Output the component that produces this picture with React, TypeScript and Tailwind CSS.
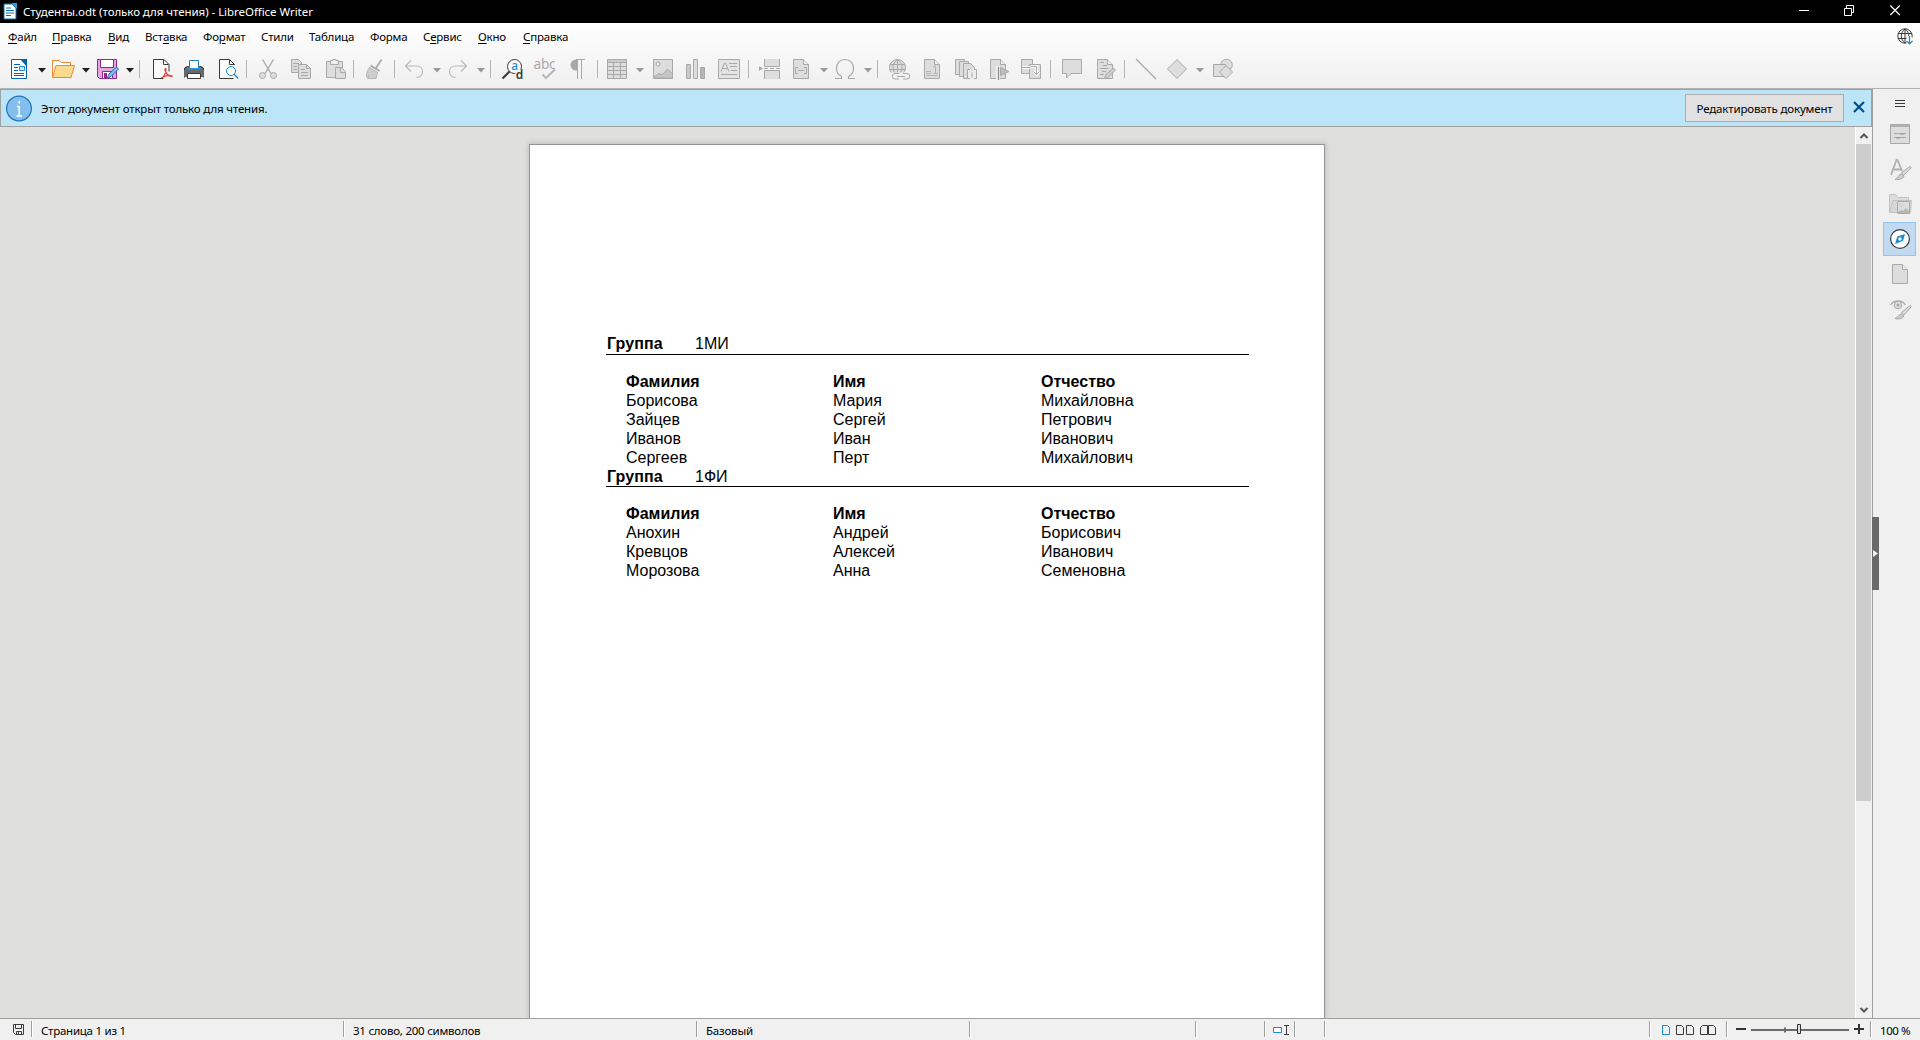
import React from "react";

type IconProps = { children: React.ReactNode; className?: string; size?: number };

function Icon({ children, className = "", size = 24 }: IconProps) {
  return (
    <svg width={size} height={size} viewBox={`0 0 ${size} ${size}`} fill="none" className={`shrink-0 ${className}`}>
      {children}
    </svg>
  );
}

const S = "#a9a9a9";
const L = "#dddddd";

function Sep({ className }: { className: string }) {
  return <div className={`h-[18px] w-px shrink-0 bg-[#b4b4b4] ${className}`} />;
}

function Arrow({ className, dim = false }: { className: string; dim?: boolean }) {
  return (
    <svg width="8" height="5" viewBox="0 0 8 5" className={`mt-[3px] shrink-0 ${className}`}>
      <path d="M0 0h8L4 4.6z" fill={dim ? "#999999" : "#1c1c1c"} />
    </svg>
  );
}

function Toolbar() {
  return (
    <div className="flex h-9 items-center pl-[7px]">
      <Icon>
        <path d="M4.5 2.5h10l5 5v14h-15z" fill="#fff" stroke="#0063b1" />
        <path d="M13 2h7v8z" fill="#0063b1" />
        <path d="M7 7.5h6M7 10.5h4M7 13.5h4M7 16.5h10M7 18.5h10" stroke="#0063b1" />
        <path d="M12.5 9.5h5v4h-5z" fill="#cbe6f8" stroke="#1e8bcd" />
      </Icon>
      <Arrow className="ml-[7px]" />
      <Icon className="ml-[5px]">
        <path d="M1.5 20V3.500h7l2 2h9v3" fill="#fff" stroke="#ed8733" />
        <path d="M5 8.500h18.500L20 20.500H1.500z" fill="#f8db8f" stroke="#ed8733" />
      </Icon>
      <Arrow className="ml-[7px]" />
      <Icon className="ml-[5px]">
        <path d="M2.500 2.500h19v19h-17l-2-2z" fill="#e3a5e2" stroke="#92278f" />
        <path d="M5.500 2.500h13v8h-13z" fill="#fff" stroke="#92278f" />
        <path d="M7.500 14.500h10v7h-10z" fill="#fff" stroke="#92278f" />
        <path d="M9 16h3v5h-3z" fill="#92278f" />
        <path d="M12 21.500l2-4.500 7.500-7 2 2-7.500 7.500z" fill="#83beec" stroke="#1e6fb5" />
      </Icon>
      <Arrow className="ml-[7px]" />
      <Sep className="ml-[5px]" />
      <Icon className="ml-[9px]">
        <path d="M20 14.500v-7l-5-5H4.500v19h10" fill="#fafafa" stroke="#3a3a38" />
        <path d="M14.500 2.500v5h5" stroke="#3a3a38" />
        <path d="M12 21c3-1 5-5 5-8.500 0-1.500-1.500-1-1 .5 1 4 3.500 6 6.500 6.500 1 0 1-1-.500-1-4-.500-7 .500-10 2.500z" stroke="#ed3d3b" strokeWidth="1.200" />
      </Icon>
      <Icon className="ml-[9px]">
        <path d="M7.500 12V3.500h9V12" fill="#fff" stroke="#1e7fc8" />
        <path d="M5 9h2v3h10V9h2l3 2v9H2v-9z" fill="#696969" />
        <path d="M2.500 20.500v-9l3-2M21.500 20.500v-9l-3-2" stroke="#3a3a38" />
        <path d="M5 11h14v1.500H5z" fill="#2f97dc" />
        <path d="M2 13h20v7H2z" fill="#696969" />
        <path d="M5.500 16.500h13v5h-13z" fill="#fff" stroke="#3a3a38" />
      </Icon>
      <Icon className="ml-[9px]">
        <path d="M19.500 8V7.500l-5-5H4.500v19h14" fill="#fafafa" stroke="#3a3a38" />
        <path d="M14.500 2.500v5h5" stroke="#3a3a38" />
        <circle cx="16" cy="14" r="4.500" fill="#fff" stroke="#1e8bcd" />
        <path d="M19.200 17.200l4 4.300" stroke="#1e8bcd" strokeWidth="1.300" />
      </Icon>
      <Sep className="ml-[7px]" />
      <Icon className="ml-[9px]">
        <path d="M6.500 2.500l8.500 14M17.500 2.500L9 16.500" stroke={S} strokeWidth="1.400" />
        <circle cx="6.500" cy="18.500" r="3" fill={L} stroke={S} />
        <circle cx="17.500" cy="18.500" r="3" fill={L} stroke={S} />
      </Icon>
      <Icon className="ml-[9px]">
        <path d="M2.500 2.500h7l3 3v10h-10z" fill={L} stroke={S} />
        <path d="M4 6.500h6M4 9.500h4M4 12.500h4" stroke={S} />
        <path d="M9.500 7.500h8l4 4v10h-12z" fill={L} stroke={S} />
        <path d="M17.500 7.500v4h4M12 12.500h4M12 15.500h7M12 18.500h7" stroke={S} />
      </Icon>
      <Icon className="ml-[10px]">
        <path d="M3.500 4.500h16v16h-16z" fill={L} stroke={S} />
        <path d="M7.500 7.500v-4h2.500v-1h3v1h2.500v4z" fill="#eee" stroke={S} />
        <path d="M12.500 10.500h6l4 4v7h-10z" fill={L} stroke={S} />
        <path d="M17.500 11v4.500h4.500" stroke={S} />
      </Icon>
      <Sep className="ml-[6px]" />
      <Icon className="ml-[8px]">
        <path d="M19.500 2.500L14 11" stroke={S} strokeWidth="1.800" />
        <path d="M8.500 8.500l9 5.500" stroke={S} strokeWidth="2" />
        <path d="M7.500 10.500l8 5-1.500 6H5.500L7 18.500l-2.500 1.500c0-4 1-7 3-9.500z" fill="#cfcfcf" stroke="#b4b4b4" />
      </Icon>
      <Sep className="ml-[8px]" />
      <Icon className="ml-[7px]">
        <path d="M9 3.500L3.500 9 9 14.500M3.500 9h11c8 0 8 11.500 0 11.500" stroke="#b9b9b9" strokeWidth="1.200" />
      </Icon>
      <Arrow dim className="ml-[7px]" />
      <Icon className="ml-[5px]">
        <path d="M15 3.500L20.500 9 15 14.500M20.500 9h-11c-8 0-8 11.500 0 11.500" stroke="#b9b9b9" strokeWidth="1.200" />
      </Icon>
      <Arrow dim className="ml-[7px]" />
      <Sep className="ml-[5px]" />
      <Icon className="ml-[9px]">
        <circle cx="14.500" cy="9.500" r="7" fill="#fdfdfd" stroke="#3a3a38" />
        <path d="M9.500 14.500L2.500 21.500" stroke="#3a3a38" strokeWidth="2.200" />
        <rect x="15.500" y="12" width="8" height="10" fill="#f4f4f4" />
        <text x="11.200" y="13" fontFamily="Noto Sans" fontSize="12" fontWeight="500" fill="#1e8bcd">a</text>
        <text x="15.800" y="22" fontFamily="Noto Sans" fontSize="12" fontWeight="600" fill="#3a3a38">d</text>
      </Icon>
      <Icon className="ml-[9px] overflow-visible">
        <text x="0.500" y="12" fontFamily="Noto Sans" fontSize="13.500" textLength="22" fill={S}>abc</text>
        <path d="M9.500 17.500l3.500 3.500 9-8.500" stroke="#b4b4b4" strokeWidth="1.800" />
      </Icon>
      <Icon className="ml-[9px]">
        <path d="M10 2.500h9M11.500 3v19M15.500 3v19" stroke={S} />
        <path d="M11.500 2.500v11H10a5.500 5.500 0 010-11z" fill={S} />
      </Icon>
      <Sep className="ml-[7px]" />
      <Icon className="ml-[7px]">
        <path d="M2.500 2.500h19v19h-19z" fill={L} stroke={S} />
        <path d="M3 3h18v2.500H3z" fill="#cccccc" />
        <path d="M3 5.500h18M3 9.500h18M3 13.500h18M3 17.500h18M8.500 6v15M15.500 6v15" stroke={S} />
      </Icon>
      <Arrow dim className="ml-[7px]" />
      <Icon className="ml-[7px]">
        <path d="M2.500 2.500h19v19h-19z" fill={L} stroke={S} />
        <circle cx="7" cy="7" r="2" fill="#eee" stroke={S} />
        <path d="M3 20l5-3.500 3 1.500 5.500-6 5 5V21H3z" fill="#c6c6c6" stroke={S} />
      </Icon>
      <Icon className="ml-[9px]">
        <path d="M2.500 7.500h4v14h-4z" fill="#c9c9c9" stroke={S} />
        <path d="M9.500 2.500h4v19h-4z" fill={L} stroke={S} />
        <path d="M16.500 10.500h4v11h-4z" fill="#b5b5b5" stroke={S} />
      </Icon>
      <Icon className="ml-[9px]">
        <path d="M1.500 2.500h21v19h-21z" fill="#e4e4e4" stroke={S} />
        <path d="M4 14.500L7.500 6h1L12 14.500M5.500 11.500h5M12 6.500h8M13 9.500h7M14 13.500h6M4 17.500h16" stroke={S} />
      </Icon>
      <Sep className="ml-[7px]" />
      <Icon className="ml-[9px]">
        <path d="M6.500 2v7.500h15V2M6.500 22v-8.500h15V22" fill={L} stroke={S} />
        <path d="M6 11.500h16" stroke={S} strokeDasharray="4 2" />
        <path d="M1 9l4 2.500L1 14z" fill={S} />
      </Icon>
      <Icon className="ml-[7px]">
        <path d="M4.500 2.500h10l5 5v14h-15z" fill={L} stroke={S} />
        <path d="M14.500 2.500v5h5" fill="#eee" stroke={S} />
        <path d="M9 10.500H6.500v6H9M15 10.500h2.500v6H15M9 13.500h6" stroke={S} />
      </Icon>
      <Arrow dim className="ml-[7px]" />
      <Icon className="ml-[5px]">
        <path d="M2 21.500h6.500v-2A9 9 0 013.500 11.500C3.500 6 7 2.500 12 2.500s8.500 3.500 8.500 9a9 9 0 01-5 8v2H22" stroke={S} strokeWidth="1.200" />
      </Icon>
      <Arrow dim className="ml-[7px]" />
      <Sep className="ml-[5px]" />
      <Icon className="ml-[9px]">
        <circle cx="10.500" cy="10.500" r="8" fill={L} stroke={S} />
        <path d="M10.500 2.500v16M3 7.500h15M2.500 12.500h16M10.500 2.500c-6 4-6 12 0 16M10.500 2.500c6 4 6 12 0 16" stroke={S} />
        <path d="M4 15.500h20v7H4z" fill="#f1f1f1" />
        <path d="M12 16.500H8a2.500 2.500 0 000 5.500h4M16 16.500h4a2.500 2.500 0 010 5.500h-4M10 19.500h8" stroke={S} />
      </Icon>
      <Icon className="ml-[9px]">
        <path d="M4.500 2.500h10l5 5v14h-15z" fill={L} stroke={S} />
        <path d="M14.500 2.500v5h5" fill="#eee" stroke={S} />
        <path d="M13 10.500l2.500-2v8M13 16.500h5M6 14.500h5M6 16.500h5M6 18.500h12" stroke="#b5b5b5" />
      </Icon>
      <Icon className="ml-[9px]">
        <path d="M2.500 2.500h9v15h-9z" fill={L} stroke={S} />
        <path d="M6.500 4.500h9v15h-9z" fill={L} stroke={S} />
        <path d="M10.500 6.500h7l4 4v11h-11z" fill={L} stroke={S} />
        <path d="M14 12h10v11H14z" fill="#ededed" />
        <path d="M17 12.500h-2.500v9H17M21 12.500h2.500v9H21M19 15.500v5M18.500 13.500h1" stroke={S} />
      </Icon>
      <Icon className="ml-[9px]">
        <path d="M4.500 2.500h10l5 5v14h-15z" fill={L} stroke={S} />
        <path d="M14.500 2.500v5h5" fill="#eee" stroke={S} />
        <path d="M10 9h4v14h-4z" fill="#f1f1f1" />
        <path d="M12.500 10v13" stroke="#8f8f8f" strokeWidth="1.300" />
        <path d="M14.500 10.500l8.500 4-8.500 4z" fill="#bdbdbd" stroke={S} />
      </Icon>
      <Icon className="ml-[9px]">
        <path d="M2.500 2.500h11v14h-11z" fill={L} stroke={S} />
        <path d="M10.500 7.500h11v14h-11z" fill={L} stroke={S} />
        <path d="M4 10.500h7M12 9.500h5.500v8M14.500 14.500l3 3 3-3" stroke="#fff" strokeWidth="2.600" />
        <path d="M4 10.500h7M12 9.500h5.500v8M14.500 14.500l3 3 3-3" stroke={S} />
      </Icon>
      <Sep className="ml-[7px]" />
      <Icon className="ml-[9px]">
        <path d="M2.500 2.500h19v14H11L6.500 21v-4.500h-4z" fill={L} stroke={S} />
      </Icon>
      <Icon className="ml-[9px]">
        <path d="M4.500 2.500h10l5 5v14h-15z" fill={L} stroke={S} />
        <path d="M14.500 2.500v5h5" fill="#eee" stroke={S} />
        <path d="M7 5.500h4M10 8.500h4M7 11.500h8M9 14.500h4M7 17.500h4" stroke={S} />
        <path d="M11.500 21.500l1.500-4 7.500-6.500 2 2-7 7z" fill="#cfcfcf" stroke={S} />
      </Icon>
      <Sep className="ml-[7px]" />
      <Icon className="ml-[9px]">
        <path d="M2 2l20 20" stroke={S} strokeWidth="1.200" />
      </Icon>
      <Icon className="ml-[7px]">
        <path d="M12 2.500L21.500 12 12 21.500 2.500 12z" fill={L} stroke={S} />
      </Icon>
      <Arrow dim className="ml-[7px]" />
      <Icon className="ml-[7px]">
        <circle cx="15.500" cy="8" r="5.800" fill={L} stroke={S} />
        <path d="M2.500 7.500h12v12h-12z" fill={L} stroke={S} />
        <path d="M15 8.500l6.500 6.500-6.500 6.500L8.500 15z" fill={L} stroke={S} />
      </Icon>
    </div>
  );
}

const menu: [string, string, string, string][] = [
  ["", "Ф", "айл", "w-11"],
  ["", "П", "равка", "w-14"],
  ["", "В", "ид", "w-[37px]"],
  ["Вст", "а", "вка", "w-[58px]"],
  ["Фо", "р", "мат", "w-[58px]"],
  ["Стили", "", "", "w-12"],
  ["Таблица", "", "", "w-[61px]"],
  ["Форма", "", "", "w-[53px]"],
  ["С", "е", "рвис", "w-[55px]"],
  ["", "О", "кно", "w-[45px]"],
  ["", "С", "правка", "w-[60px]"],
];

function MenuBar() {
  return (
    <div className="flex h-[28px] items-center pl-2 pb-px">
      {menu.map(([a, b, c, w]) => (
        <span key={a + b + c} className={`shrink-0 whitespace-nowrap tracking-[-0.2px] ${w}`}>
          {a}
          {b && <span className="underline decoration-1 underline-offset-[1.5px]">{b}</span>}
          {c}
        </span>
      ))}
      <svg width="17" height="17" viewBox="0 0 17 17" fill="none" className="mt-[5px] mr-[6px] ml-auto self-start">
        <circle cx="8" cy="8" r="7.200" stroke="#3a3a38" />
        <path d="M8 1v14M1 5.500h14M1 10.500h10M8 1C3 5 3 11 8 15M8 1c3 2 4 5 3.700 7" stroke="#3a3a38" />
        <path d="M9.500 9h6v7.500h-6z" fill="#fcfcfc" />
        <path d="M12.500 8v8M9.500 13l3 3 3-3" stroke="#1e8bcd" strokeWidth="1.200" />
      </svg>
    </div>
  );
}

function TitleBar() {
  return (
    <div className="flex h-[23px] items-center bg-black text-white">
      <svg width="14" height="17" viewBox="0 0 14 17" className="ml-[3px] mb-px">
        <path d="M1 1h8l4 4v11H1z" fill="#fff" stroke="#0e6fae" />
        <path d="M8.500 0H14v6z" fill="#2f9fd9" />
        <path d="M3 5h5M3 7.500h8M3 10h8M3 12.500h5" stroke="#0e6fae" strokeWidth="1.200" />
      </svg>
      <span className="ml-[6px] tracking-[-0.050px] whitespace-nowrap">Студенты.odt (только для чтения) - LibreOffice Writer</span>
      <svg width="122" height="11" viewBox="0 0 122 11" fill="none" stroke="#fff" className="mr-2 mb-[3px] ml-auto">
        <path d="M9 5.500h10" />
        <path d="M54.500 3.500h7v7h-7zM56.500 3V.500h7v7H62" />
        <path d="M100.300.500l9.500 9.500M109.800.500l-9.500 9.500" strokeWidth="1.200" />
      </svg>
    </div>
  );
}

function InfoBar() {
  return (
    <div className="flex h-[38px] items-center border border-[#a0a0a0] bg-[#bce5f7] pl-[5px]">
      <svg width="27" height="27" viewBox="0 0 27 27" fill="none" className="shrink-0">
        <circle cx="13" cy="13.500" r="12.400" fill="#83beec" stroke="#1e74bd" strokeWidth="1.200" />
        <path d="M13.200 11v10.500M13.200 6v2.500M11 11.500h2M10.500 21h5.500" stroke="#fff" strokeWidth="1.500" />
      </svg>
      <span className="ml-2 pt-px tracking-[-0.170px] whitespace-nowrap">Этот документ открыт только для чтения.</span>
      <button className="mr-[9px] ml-auto flex h-7 w-[159px] items-center justify-center border border-[#adadad] bg-[#e1e1e1] pt-px tracking-[-0.160px] whitespace-nowrap">
        Редактировать документ
      </button>
      <svg width="12" height="12" viewBox="0 0 12 12" className="mr-[6px] mb-[2px] shrink-0">
        <path d="M1 1l10 10M11 1L1 11" stroke="#004e8c" strokeWidth="2.200" />
      </svg>
    </div>
  );
}

type Group = { code: string; rows: string[][] };
const groups: Group[] = [
  {
    code: "1МИ",
    rows: [
      ["Борисова", "Мария", "Михайловна"],
      ["Зайцев", "Сергей", "Петрович"],
      ["Иванов", "Иван", "Иванович"],
      ["Сергеев", "Перт", "Михайлович"],
    ],
  },
  {
    code: "1ФИ",
    rows: [
      ["Анохин", "Андрей", "Борисович"],
      ["Кревцов", "Алексей", "Иванович"],
      ["Морозова", "Анна", "Семеновна"],
    ],
  },
];

function Page() {
  return (
    <div className="ml-[529px] h-full w-[796px] shrink-0 border-x border-t border-[#949494] bg-white pt-[189px] pl-[76px] font-['Liberation_Sans',Arial,sans-serif] text-[16px] leading-[19px] shadow-[0_0_5px_1px_rgba(0,0,0,0.14)]">
      {groups.map((g, i) => (
        <section key={g.code} className="w-[643px]">
          <div className={`flex border-b border-black ${i === 0 ? "h-[21px]" : "h-5"}`}>
            <b className="w-[89px] pl-px tracking-[0.1px]">Группа</b>
            <span>{g.code}</span>
          </div>
          <div className="grid grid-cols-[207px_208px_1fr] pt-[17px] pl-5">
            <b>Фамилия</b>
            <b>Имя</b>
            <b>Отчество</b>
            {g.rows.flat().map((c, j) => (
              <span key={j}>{c}</span>
            ))}
          </div>
        </section>
      ))}
    </div>
  );
}

function ScrollBar() {
  return (
    <div className="flex w-[17px] shrink-0 flex-col border-l border-white bg-[#f0f0f0]">
      <svg width="16" height="17" viewBox="0 0 16 17" fill="none">
        <path d="M4.500 11L8 7.500l3.500 3.500" stroke="#555" strokeWidth="2" />
      </svg>
      <div className="mr-px h-[657px] bg-[#cdcdcd]" />
      <svg width="16" height="17" viewBox="0 0 16 17" fill="none" className="mt-auto">
        <path d="M4.500 7L8 10.500 11.500 7" stroke="#555" strokeWidth="2" />
      </svg>
    </div>
  );
}

function Sidebar() {
  return (
    <aside className="relative flex w-12 shrink-0 flex-col items-center border-l border-[#a0a0a0] bg-[#f0f0f0] pl-[6px]">
      <svg width="10" height="8" viewBox="0 0 10 8" className="mt-[11px] mb-[9px] ml-px" stroke="#3a3a38">
        <path d="M0 .500h10M0 3.500h10M0 6.500h10" />
      </svg>
      <div className="flex flex-col gap-px">
        <div className="flex h-[34px] w-[33px] items-center justify-center">
          <Icon>
            <path d="M2.500 2.500h19v19h-19z" fill={L} stroke={S} />
            <path d="M3 3h18v2H3z" fill="#b0b0b0" />
            <path d="M6 11.500h12M6 15.500h12" stroke={S} />
            <path d="M12 11h4v1.500h-4zM8 15h4v1.500H8z" fill="#9c9c9c" />
          </Icon>
        </div>
        <div className="flex h-[34px] w-[33px] items-center justify-center">
          <Icon>
            <path d="M3 18L8.500 3h1L14 14M5 12.500h8" stroke="#b0b0b0" strokeWidth="1.800" />
            <path d="M13.500 15.500L22 9.500c1 0 1.500 1 1 1.500l-7.500 7.500z" fill={L} stroke={S} />
            <path d="M7 22.500c3-1 3-5 6.500-5.500l2.500 2c-1 3-5 4-9 3.500z" fill="#ccc" stroke={S} />
          </Icon>
        </div>
        <div className="flex h-[34px] w-[33px] items-center justify-center">
          <Icon>
            <path d="M1.500 19.500v-17h6l2 3h11V9" fill={L} stroke="#c3c3c3" />
            <path d="M5 8.500h18.500l-1 12H1.500z" fill="#d6d6d6" stroke="#c3c3c3" />
            <path d="M9.500 9.500h12v12h-12z" fill={L} stroke={S} />
            <circle cx="13" cy="13" r="1.200" fill="#fff" stroke={S} strokeWidth=".6" />
            <path d="M10 20l3-2 2 1 3-3 3 3v2H10z" fill="#b5b5b5" />
          </Icon>
        </div>
        <div className="flex h-[34px] w-[33px] items-center justify-center border border-[#90c5f1] bg-[#c1daf1]">
          <Icon>
            <circle cx="12" cy="12" r="9.400" fill="#fff" stroke="#3a3a38" strokeWidth="1.200" />
            <path d="M17 7l-2 7-8 3 2.300-7.500z" fill="#1e8bcd" />
            <circle cx="12" cy="12" r="1.700" fill="#fff" />
          </Icon>
        </div>
        <div className="flex h-[34px] w-[33px] items-center justify-center">
          <Icon>
            <path d="M4.500 2.500h10l5 5v14h-15z" fill={L} stroke={S} />
            <path d="M14.500 2.500v5h5" fill="#f0f0f0" stroke={S} />
          </Icon>
        </div>
        <div className="flex h-[34px] w-[33px] items-center justify-center">
          <Icon>
            <path d="M2.500 8C6 2.500 14 2.500 17.500 8" stroke={S} strokeWidth="1.200" />
            <circle cx="10" cy="8" r="3.800" fill={L} stroke={S} />
            <circle cx="10" cy="8" r="1.500" fill={S} />
            <path d="M13.500 15.500L22 8.500c1 0 1.500 1 1 1.500l-7.500 8.500z" fill={L} stroke={S} />
            <path d="M7 21.500c3-1 3-4 6.500-4.500l2.500 2c-1 2.500-5 3.500-9 2.500z" fill="#ccc" stroke={S} />
          </Icon>
        </div>
      </div>
      <div className="absolute top-[428px] -left-px flex h-[73px] w-[7px] items-center bg-[#696969]">
        <svg width="7" height="8" viewBox="0 0 7 8">
          <path d="M1 0l5 3.500L1 7z" fill="#f0f0f0" />
        </svg>
      </div>
    </aside>
  );
}

function StatusSep({ className = "" }: { className?: string }) {
  return <div className={`mb-px h-4 w-[2px] shrink-0 border-r border-l border-r-white border-l-[#a0a0a0] ${className}`} />;
}

function StatusBar() {
  return (
    <footer className="flex h-[22px] items-center border-t border-[#a0a0a0] bg-[#f0f0f0] whitespace-nowrap">
      <svg width="11" height="11" viewBox="0 0 11 11" fill="none" stroke="#3a3a38" className="ml-[13px] shrink-0">
        <path d="M.500.500h10v10h-8l-2-2zM2.500.500v4h6v-4M3.500 10.500v-3h5v3M5.500 8v2" />
      </svg>
      <StatusSep className="ml-[7px]" />
      <span className="w-[310px] shrink-0 pt-0.5 pl-2 tracking-[-0.250px]">Страница 1 из 1</span>
      <StatusSep />
      <span className="w-[351px] shrink-0 pt-0.5 pl-2 tracking-[-0.240px]">31 слово, 200 символов</span>
      <StatusSep />
      <span className="w-[271px] shrink-0 pt-0.5 pl-2 tracking-[-0.200px]">Базовый</span>
      <StatusSep />
      <StatusSep className="ml-[224px]" />
      <StatusSep className="ml-[67px]" />
      <svg width="17" height="11" viewBox="0 0 17 11" fill="none" className="mt-[2px] ml-[7px] shrink-0">
        <path d="M.500 2.500h8v5h-8z" stroke="#1e8bcd" fill="#fff" />
        <path d="M11 .500h5M11 9.500h5M13.500.500v9" stroke="#3a3a38" />
      </svg>
      <StatusSep className="ml-[4px]" />
      <StatusSep className="ml-[28px]" />
      <StatusSep className="ml-[323px]" />
      <svg width="55" height="11" viewBox="0 0 55 11" fill="none" stroke="#3a3a38" className="mt-[2px] ml-[11px] shrink-0">
        <path d="M.500.500h5l2 2v7h-7z" stroke="#1e8bcd" />
        <path d="M14.500.500h5l2 2v7h-7zM24.500.500h5l2 2v7h-7z" />
        <path d="M38.500 2.500l2-2h5v9h-7zM46.500.500h5l2 2v7h-7z" />
      </svg>
      <StatusSep className="ml-[9px]" />
      <svg width="128" height="12" viewBox="0 0 128 12" fill="none" className="mt-px ml-[8px] shrink-0">
        <path d="M0 5h10M118 5h10M123 0v10" stroke="#333" strokeWidth="2" />
        <path d="M15 6h98" stroke="#6b6b6b" strokeWidth="2" />
        <path d="M49 3.500v5" stroke="#6b6b6b" strokeWidth="2" />
        <path d="M61.500.500h3v9h-3z" fill="#ddd" stroke="#333" />
      </svg>
      <StatusSep className="ml-[6px]" />
      <span className="pt-0.5 pl-2 tracking-[-0.400px]">100 %</span>
    </footer>
  );
}

export default function App() {
  return (
    <div className="flex h-[1040px] w-[1920px] flex-col overflow-hidden bg-[#f0f0f0] font-['Noto_Sans','Open_Sans',sans-serif] text-[11.5px] leading-4 text-black">
      <TitleBar />
      <header className="flex h-[66px] flex-col border-b border-[#b4b4b4] bg-linear-to-b from-white to-[#efefef]">
        <MenuBar />
        <Toolbar />
      </header>
      <div className="flex min-h-0 flex-1">
        <main className="flex min-w-0 flex-1 flex-col">
          <InfoBar />
          <div className="flex min-h-0 flex-1">
            <div className="flex flex-1 overflow-hidden bg-[#dfdfdd] pt-[17px]">
              <Page />
            </div>
            <ScrollBar />
          </div>
        </main>
        <Sidebar />
      </div>
      <StatusBar />
    </div>
  );
}
